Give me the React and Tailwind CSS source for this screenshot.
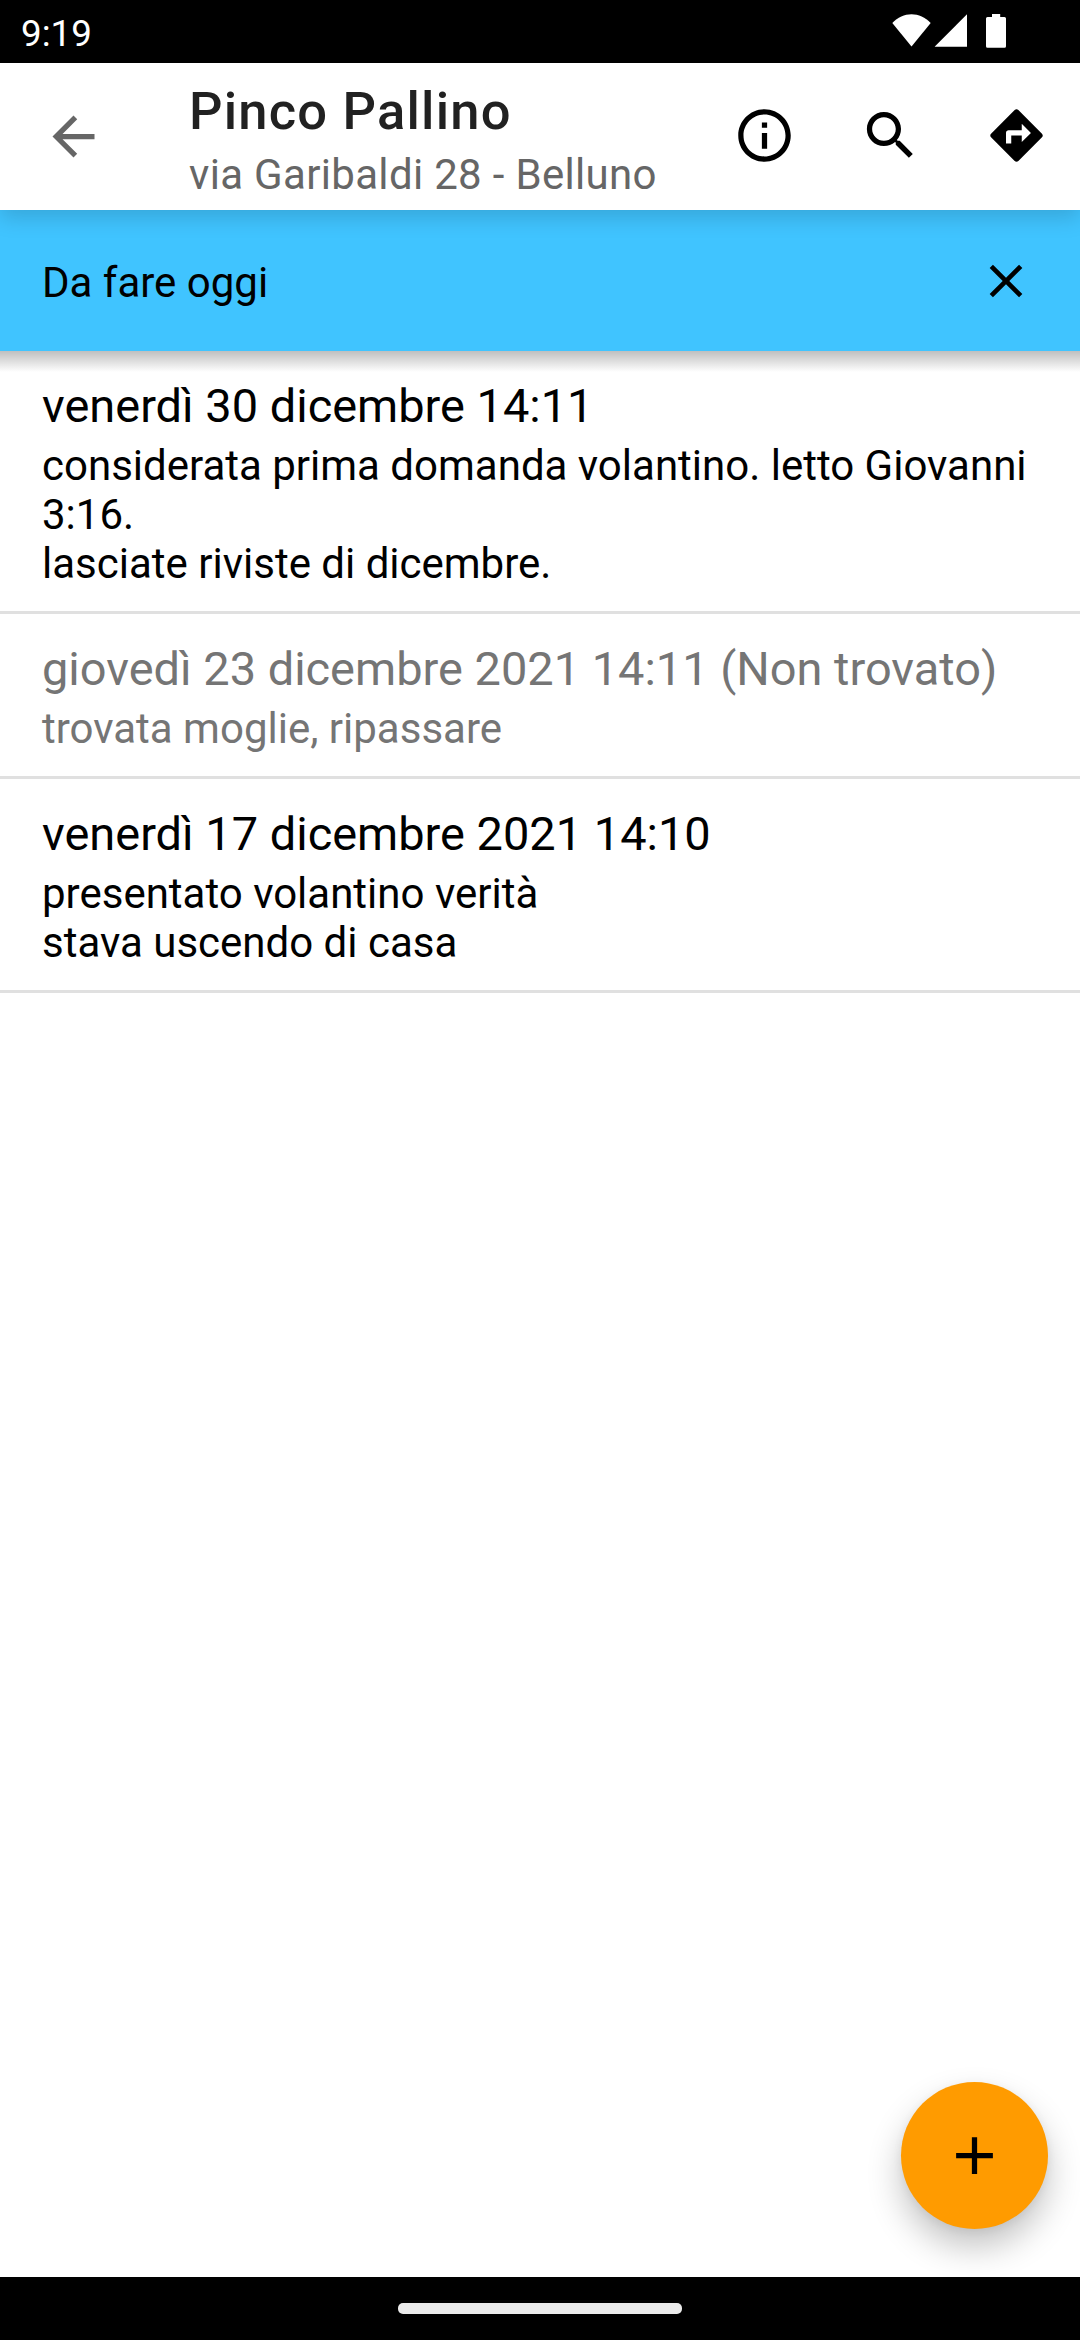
const visits = [
  {
    title: "venerdì 30 dicembre 14:11",
    lines: ["considerata prima domanda volantino. letto Giovanni", "3:16.", "lasciate riviste di dicembre."],
  },
  {
    title: "giovedì 23 dicembre 2021 14:11 (Non trovato)",
    lines: ["trovata moglie, ripassare"],
    muted: true,
  },
  {
    title: "venerdì 17 dicembre 2021 14:10",
    lines: ["presentato volantino verità", "stava uscendo di casa"],
  },
];

function Icon({ d, className }) {
  return (
    <svg viewBox="0 0 24 24" fill="currentColor" className={className}>
      <path d={d} />
    </svg>
  );
}

function StatusBar() {
  return (
    <div className="flex h-[63px] items-start justify-between bg-black pl-[21px] pr-[74px] text-white">
      <span className="mt-[12px] h-[43px] text-[36.75px] leading-[43px]">9:19</span>
      <svg viewBox="0 0 114 34" fill="currentColor" className="mt-[14px] h-[34px] w-[114px]">
        <path d="M0.3 9C11-2.8 28-2.8 38.7 9L19.5 32.5Z" />
        <path d="M42.6 32.8L75 0.2V32.8Z" />
        <path d="M100 0H108.2V3H112.5Q114 3 114 4.5V32.3Q114 33.8 112.5 33.8H95.5Q94 33.8 94 32.3V4.5Q94 3 95.5 3H100Z" />
      </svg>
    </div>
  );
}

function AppBar() {
  return (
    <header className="relative z-20 flex h-[147px] bg-white pl-[42px] pr-[32px] shadow-[0_8px_20px_rgba(0,0,0,0.15)]">
      <Icon
        className="mt-[42px] size-[63px] shrink-0 text-[#666666]"
        d="M20 11H7.83l5.59-5.59L12 4l-8 8 8 8 1.41-1.41L7.83 13H20v-2z"
      />
      <div className="ml-[84px] mt-[17px] flex-1 whitespace-nowrap">
        <h1 className="h-[62px] text-[52.5px] font-medium leading-[62px] tracking-[1.2px] text-[#212121]">Pinco Pallino</h1>
        <p className="mt-[8px] h-[49px] text-[42px] leading-[49px] tracking-[0.32px] text-[#666666]">via Garibaldi 28 - Belluno</p>
      </div>
      <div className="mt-[41px] flex gap-[63px] text-black">
        <Icon
          className="size-[63px]"
          d="M11 7h2v2h-2zm0 4h2v6h-2zm1-9C6.48 2 2 6.48 2 12s4.48 10 10 10 10-4.48 10-10S17.52 2 12 2zm0 18c-4.41 0-8-3.59-8-8s3.59-8 8-8 8 3.59 8 8-3.59 8-8 8z"
        />
        <Icon
          className="size-[63px]"
          d="M15.5 14h-.79l-.28-.27C15.41 12.59 16 11.11 16 9.5 16 5.91 13.09 3 9.5 3S3 5.91 3 9.5 5.91 16 9.5 16c1.61 0 3.09-.59 4.23-1.57l.27.28v.79l5 4.99L20.49 19l-4.99-5zm-6 0C7.01 14 5 11.99 5 9.5S7.01 5 9.5 5 14 7.01 14 9.5 11.99 14 9.5 14z"
        />
        <Icon
          className="size-[63px]"
          d="M21.71 11.29l-9-9c-.39-.39-1.02-.39-1.41 0l-9 9c-.39.39-.39 1.02 0 1.41l9 9c.39.39 1.02.39 1.41 0l9-9c.39-.38.39-1.01 0-1.41zM14 14.5V12h-4v3H8v-4c0-.55.45-1 1-1h5V7.5l3.5 3.5-3.5 3.5z"
        />
      </div>
    </header>
  );
}

function Banner() {
  return (
    <div className="relative z-10 flex h-[141px] items-center justify-between bg-[#40c4ff] pl-[42px] pr-[46px] text-black">
      <span className="mt-[4px] text-[42px] leading-[49px]">Da fare oggi</span>
      <Icon
        className="size-[56px]"
        d="M19 6.41L17.59 5 12 10.59 6.41 5 5 6.41 10.59 12 5 17.59 6.41 19 12 13.41 17.59 19 19 17.59 13.41 12z"
      />
      <div className="absolute inset-x-0 top-full h-[21px] bg-linear-to-b from-black/25 to-black/0" />
    </div>
  );
}

function Visit({ title, lines, muted }) {
  return (
    <li className={`border-b-[3px] border-[#e0e0e0] pb-[23px] pl-[42px] pt-[27px] ${muted ? "text-[#757575]" : "text-black"}`}>
      <h2 className="h-[55px] whitespace-nowrap text-[46.95px] leading-[55px]">{title}</h2>
      <div className="mt-[8px] text-[42px] leading-[49px]">
        {lines.map((line) => (
          <p key={line} className="h-[49px] whitespace-nowrap">{line}</p>
        ))}
      </div>
    </li>
  );
}

export default function App() {
  return (
    <div className="relative flex h-[2340px] w-[1080px] flex-col overflow-hidden bg-white font-['Roboto',sans-serif]">
      <StatusBar />
      <AppBar />
      <Banner />
      <ul className="flex-1">
        {visits.map((visit) => (
          <Visit key={visit.title} {...visit} />
        ))}
      </ul>
      <button className="absolute bottom-[111px] right-[32px] flex size-[147px] items-center justify-center rounded-full bg-[#ff9b00] text-black shadow-[0_18px_34px_rgba(0,0,0,0.24),0_2px_10px_rgba(0,0,0,0.06)]">
        <Icon className="size-[63px]" d="M19 13h-6v6h-2v-6H5v-2h6V5h2v6h6v2z" />
      </button>
      <nav className="relative flex h-[63px] justify-center bg-black pt-[26px]">
        <div className="h-[11px] w-[284px] rounded-[5px] bg-[#ebebeb]" />
      </nav>
    </div>
  );
}
